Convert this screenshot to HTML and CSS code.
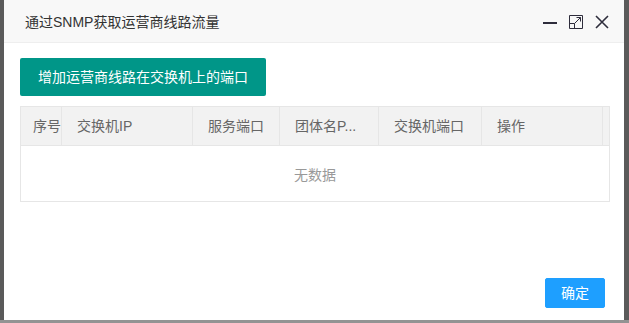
FILE: index.html
```html
<!DOCTYPE html>
<html lang="zh-CN">
<head>
<meta charset="utf-8">
<title>通过SNMP获取运营商线路流量</title>
<link rel="stylesheet" href="styles.css">
</head>
<body>
<div class="screen">
  <div class="stage">
    <div class="edge edge-left"></div>
    <div class="dialog">
      <div class="dialog-head">
        <span class="dialog-title">通过SNMP获取运营商线路流量</span>
        <div class="dialog-tools">
          <svg class="tool" width="16" height="16" viewBox="0 0 16 16"><path d="M1 9h14" stroke="#2e2d3c" stroke-width="2"/></svg>
          <svg class="tool" width="16" height="16" viewBox="0 0 16 16" fill="none" stroke="#2e2d3c" stroke-width="1"><path d="M1.5 1.5h13v13h-13z"/><path d="M1.5 9.5h5v5"/><path d="M6.5 9.5l6-6M8.5 3.5h4v4"/></svg>
          <svg class="tool" width="16" height="16" viewBox="0 0 16 16" fill="none" stroke="#2e2d3c" stroke-width="1.6"><path d="M2 2l12 12M14 2L2 14"/></svg>
        </div>
      </div>
      <div class="dialog-body">
        <button class="btn-green">增加运营商线路在交换机上的端口</button>
        <div class="table">
          <div class="thead">
            <div class="th th-index">序号</div>
            <div class="th">交换机IP</div>
            <div class="th">服务端口</div>
            <div class="th">团体名P...</div>
            <div class="th">交换机端口</div>
            <div class="th">操作</div>
            <div class="th gutter"></div>
          </div>
          <div class="tbody">无数据</div>
        </div>
      </div>
      <div class="dialog-foot">
        <button class="btn-blue">确定</button>
      </div>
    </div>
    <div class="edge edge-right"></div>
  </div>
  <div class="bottom-strip"></div>
</div>
</body>
</html>
```
FILE: styles.css
```css
* { box-sizing: border-box; }
html, body { margin: 0; padding: 0; }
body {
  font-family: "Liberation Sans", "Noto Sans CJK SC", sans-serif;
  font-size: 14px;
  color: #333;
  background: #5a5a5a;
}
.screen {
  width: 629px;
  height: 323px;
  display: flex;
  flex-direction: column;
}
.stage {
  flex: 1;
  display: flex;
}
.edge { background: #5a5a5a; }
.edge-left { width: 4px; }
.edge-right { width: 5px; }
.bottom-strip { height: 3px; background: #939393; }

.dialog {
  flex: 1;
  background: #fff;
  display: flex;
  flex-direction: column;
}
.dialog-head {
  height: 43px;
  background: #f8f8f8;
  border-bottom: 1px solid #eee;
  display: flex;
  align-items: center;
  justify-content: space-between;
  padding: 1px 14px 0 21px;
}
.dialog-title {
  font-size: 14px;
  line-height: 20px;
  color: #333;
}
.dialog-tools {
  display: flex;
  align-items: center;
  gap: 10px;
}
.tool { display: block; }

.dialog-body {
  flex: 1;
  padding: 15px 14px 0 16px;
  display: flex;
  flex-direction: column;
  align-items: flex-start;
}
.btn-green {
  height: 38px;
  padding: 0 18px;
  border: 0;
  border-radius: 2px;
  background: #009688;
  color: #fff;
  font: inherit;
  font-size: 14px;
  line-height: 38px;
  white-space: nowrap;
}
.table {
  margin-top: 10px;
  width: 590px;
  border: 1px solid #e6e6e6;
}
.thead {
  display: grid;
  grid-template-columns: 41px 131px 87px 99px 103px 121px 6px;
  height: 39px;
  background: #f2f2f2;
  border-bottom: 1px solid #e6e6e6;
}
.th {
  padding: 0 0 0 15px;
  border-right: 1px solid #e6e6e6;
  line-height: 38px;
  color: #666;
  white-space: nowrap;
  overflow: hidden;
}
.th-index { padding-left: 12px; }
.th.gutter { border-right: 0; padding: 0; }
.tbody {
  height: 55px;
  display: flex;
  align-items: center;
  justify-content: center;
  color: #999;
}

.dialog-foot {
  display: flex;
  justify-content: flex-end;
  padding: 0 19px 12px;
}
.btn-blue {
  height: 30px;
  padding: 0 15px;
  border: 1px solid #1e9fff;
  border-radius: 2px;
  background: #1e9fff;
  color: #fff;
  font: inherit;
  font-size: 14px;
  line-height: 28px;
}
```
